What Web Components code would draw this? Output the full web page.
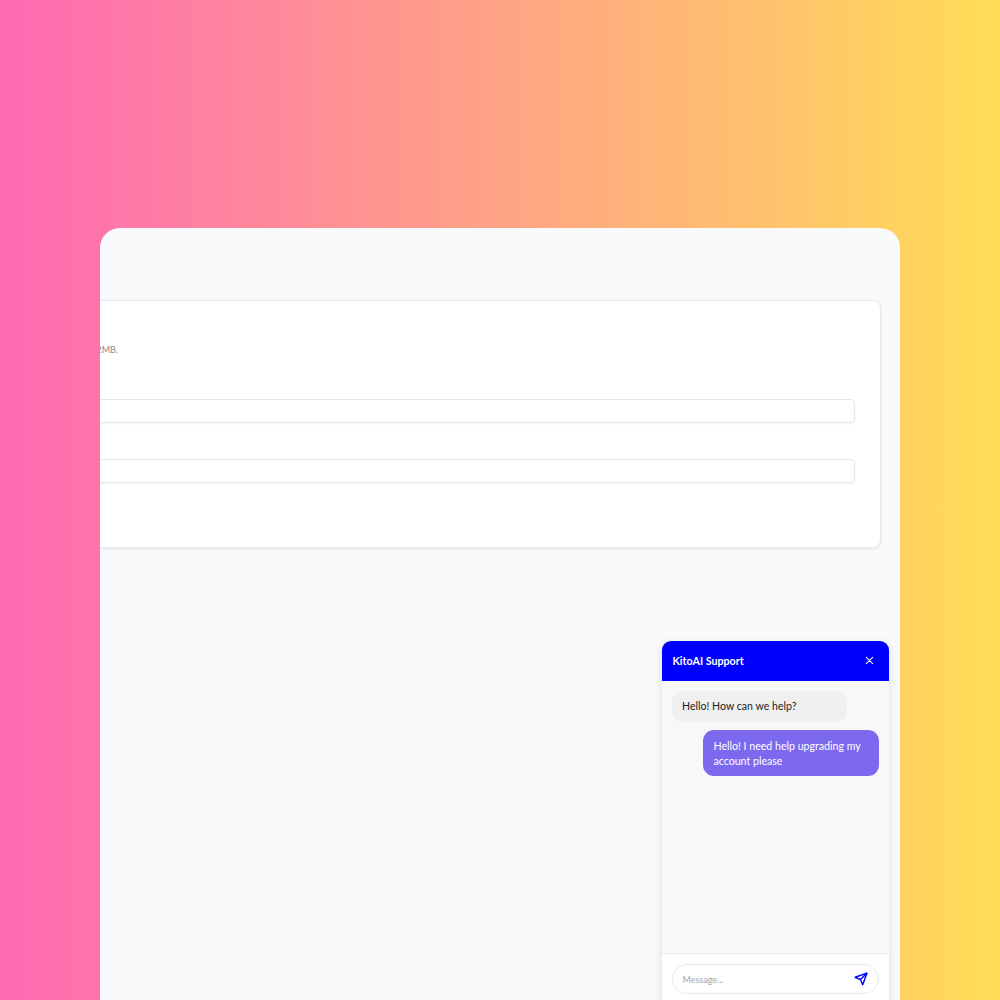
<!DOCTYPE html>
<html lang="en">
<head>
<meta charset="utf-8">
<title>KitoAI Support</title>
<style>
    html, body { margin: 0; height: 100%; overflow: hidden; }
    body { font-family: Lato, "Noto Sans", sans-serif; }
</style>
</head>
<body>
<app-stage>
    <app-window>
        <settings-card>
            <span slot="hint">Upload a JPG or PNG image, up to 2MB.</span>
        </settings-card>
        <chat-widget slot="overlay" title-text="KitoAI Support">
            <chat-bubble from="bot">Hello! How can we help?</chat-bubble>
            <chat-bubble from="user">Hello! I need help upgrading my account please</chat-bubble>
        </chat-widget>
    </app-window>
</app-stage>

<script>
/*fondo con degradado*/
class AppStage extends HTMLElement {
    constructor() {
        super();
        this.attachShadow({ mode: 'open' });
        this.shadowRoot.innerHTML = `
            <style>
                :host {
                    display: block;
                    height: 1000px;
                    box-sizing: border-box;
                    padding: 228px 100px 0;
                    overflow: hidden;
                    background: linear-gradient(90deg, #ff69b4 0%, #ffdd57 100%);
                }
            </style>
            <slot></slot>
        `;
    }
}

/*ventana blanca, recorta lo que se sale*/
class AppWindow extends HTMLElement {
    constructor() {
        super();
        this.attachShadow({ mode: 'open' });
        this.shadowRoot.innerHTML = `
            <style>
                :host {
                    display: block;
                    position: relative;
                    height: 800px;
                    padding-top: 72px;
                    box-sizing: border-box;
                    background: #f9fafb;
                    border-radius: 20px 20px 0 0;
                    overflow: hidden;
                }
            </style>
            <slot></slot>
            <slot name="overlay"></slot>
        `;
    }
}

class SettingsCard extends HTMLElement {
    constructor() {
        super();
        this.attachShadow({ mode: 'open' });
        this.shadowRoot.innerHTML = `
            <style>
                :host {
                    display: block;
                    box-sizing: border-box;
                    width: 1081px;
                    height: 248px;
                    margin-left: -300px;
                    padding: 42px 25px 0 0;
                    background: #fff;
                    border: 1px solid #e9eaec;
                    border-radius: 8px;
                    box-shadow: 0 1px 3px rgba(0, 0, 0, .1);
                }
                .hint {
                    width: 317px;
                    height: 14px;
                    font: 9px/14px Lato, sans-serif;
                    color: #8a8a8a;
                    text-align: right;
                    white-space: nowrap;
                }
                .field {
                    height: 24px;
                    box-sizing: border-box;
                    margin-top: 42px;
                    background: #fff;
                    border: 1px solid #e5e7eb;
                    border-radius: 4px;
                    box-shadow: 0 1px 2px rgba(0, 0, 0, .05);
                }
                .field + .field { margin-top: 36px; }
            </style>
            <div class="hint"><slot name="hint"></slot></div>
            <div class="field"></div>
            <div class="field"></div>
        `;
    }
}

/*widget de chat flotante*/
class ChatWidget extends HTMLElement {
    constructor() {
        super();
        this.attachShadow({ mode: 'open' });
        this.shadowRoot.innerHTML = `
            <style>
                :host {
                    position: absolute;
                    left: 561.5px;
                    top: 413px;
                    width: 227.5px;
                    height: 400px;
                    display: flex;
                    flex-direction: column;
                    background: #f7f8fa;
                    border-radius: 9px 9px 0 0;
                    box-shadow: 0 2px 10px rgba(0, 0, 0, .12);
                    overflow: hidden;
                }
                header {
                    flex: none;
                    height: 40px;
                    box-sizing: border-box;
                    display: flex;
                    align-items: center;
                    justify-content: space-between;
                    padding: 0 14px 1px 11px;
                    background: #0000ff;
                    color: #fff;
                    font: 700 10.7px Lato, sans-serif;
                }
                header svg { display: block; }
                .messages {
                    flex: 1;
                    display: flex;
                    flex-direction: column;
                    gap: 8px;
                    padding: 10px;
                }
                footer {
                    flex: none;
                    height: 88px;
                    box-sizing: border-box;
                    padding: 10px;
                    background: #fff;
                    border-top: 1px solid #e8eaee;
                }
                .input {
                    height: 30px;
                    box-sizing: border-box;
                    display: flex;
                    align-items: center;
                    justify-content: space-between;
                    padding: 0 10px;
                    border: 1px solid #e8eaee;
                    border-radius: 15px;
                    background: #fff;
                    font: 9px Lato, sans-serif;
                    color: #a3a7b0;
                }
            </style>
            <header>
                <span id="title"></span>
                <svg width="11" height="11" viewBox="0 0 24 24" fill="none" stroke="#fff" stroke-width="2.2" stroke-linecap="round">
                    <path d="M5 5l14 14M19 5L5 19"/>
                </svg>
            </header>
            <div class="messages"><slot></slot></div>
            <footer>
                <div class="input">
                    <span>Message...</span>
                    <svg width="14" height="14" viewBox="0 0 24 24" fill="none" stroke="#0000ff" stroke-width="2.4" stroke-linecap="round" stroke-linejoin="round">
                        <path d="M22 2L15 22l-4-9-9-4z"/>
                        <path d="M22 2L11 13"/>
                    </svg>
                </div>
            </footer>
        `;
        this.shadowRoot.getElementById('title').textContent = this.getAttribute('title-text');
    }
}

class ChatBubble extends HTMLElement {
    constructor() {
        super();
        this.attachShadow({ mode: 'open' });
        this.shadowRoot.innerHTML = `
            <style>
                :host {
                    display: block;
                    box-sizing: border-box;
                    width: 175.5px;
                    padding: 8px 10.5px;
                    border-radius: 11px;
                    font: 10.6px/15px Lato, sans-serif;
                    background: #f0f0f0;
                    color: #222;
                }
                :host([from="user"]) {
                    align-self: flex-end;
                    width: 176px;
                    padding: 9px 10.5px 7px;
                    background: #7c69ef;
                    color: #fff;
                }
            </style>
            <slot></slot>
        `;
    }
}

customElements.define('app-stage', AppStage);
customElements.define('app-window', AppWindow);
customElements.define('settings-card', SettingsCard);
customElements.define('chat-widget', ChatWidget);
customElements.define('chat-bubble', ChatBubble);
</script>
</body>
</html>
